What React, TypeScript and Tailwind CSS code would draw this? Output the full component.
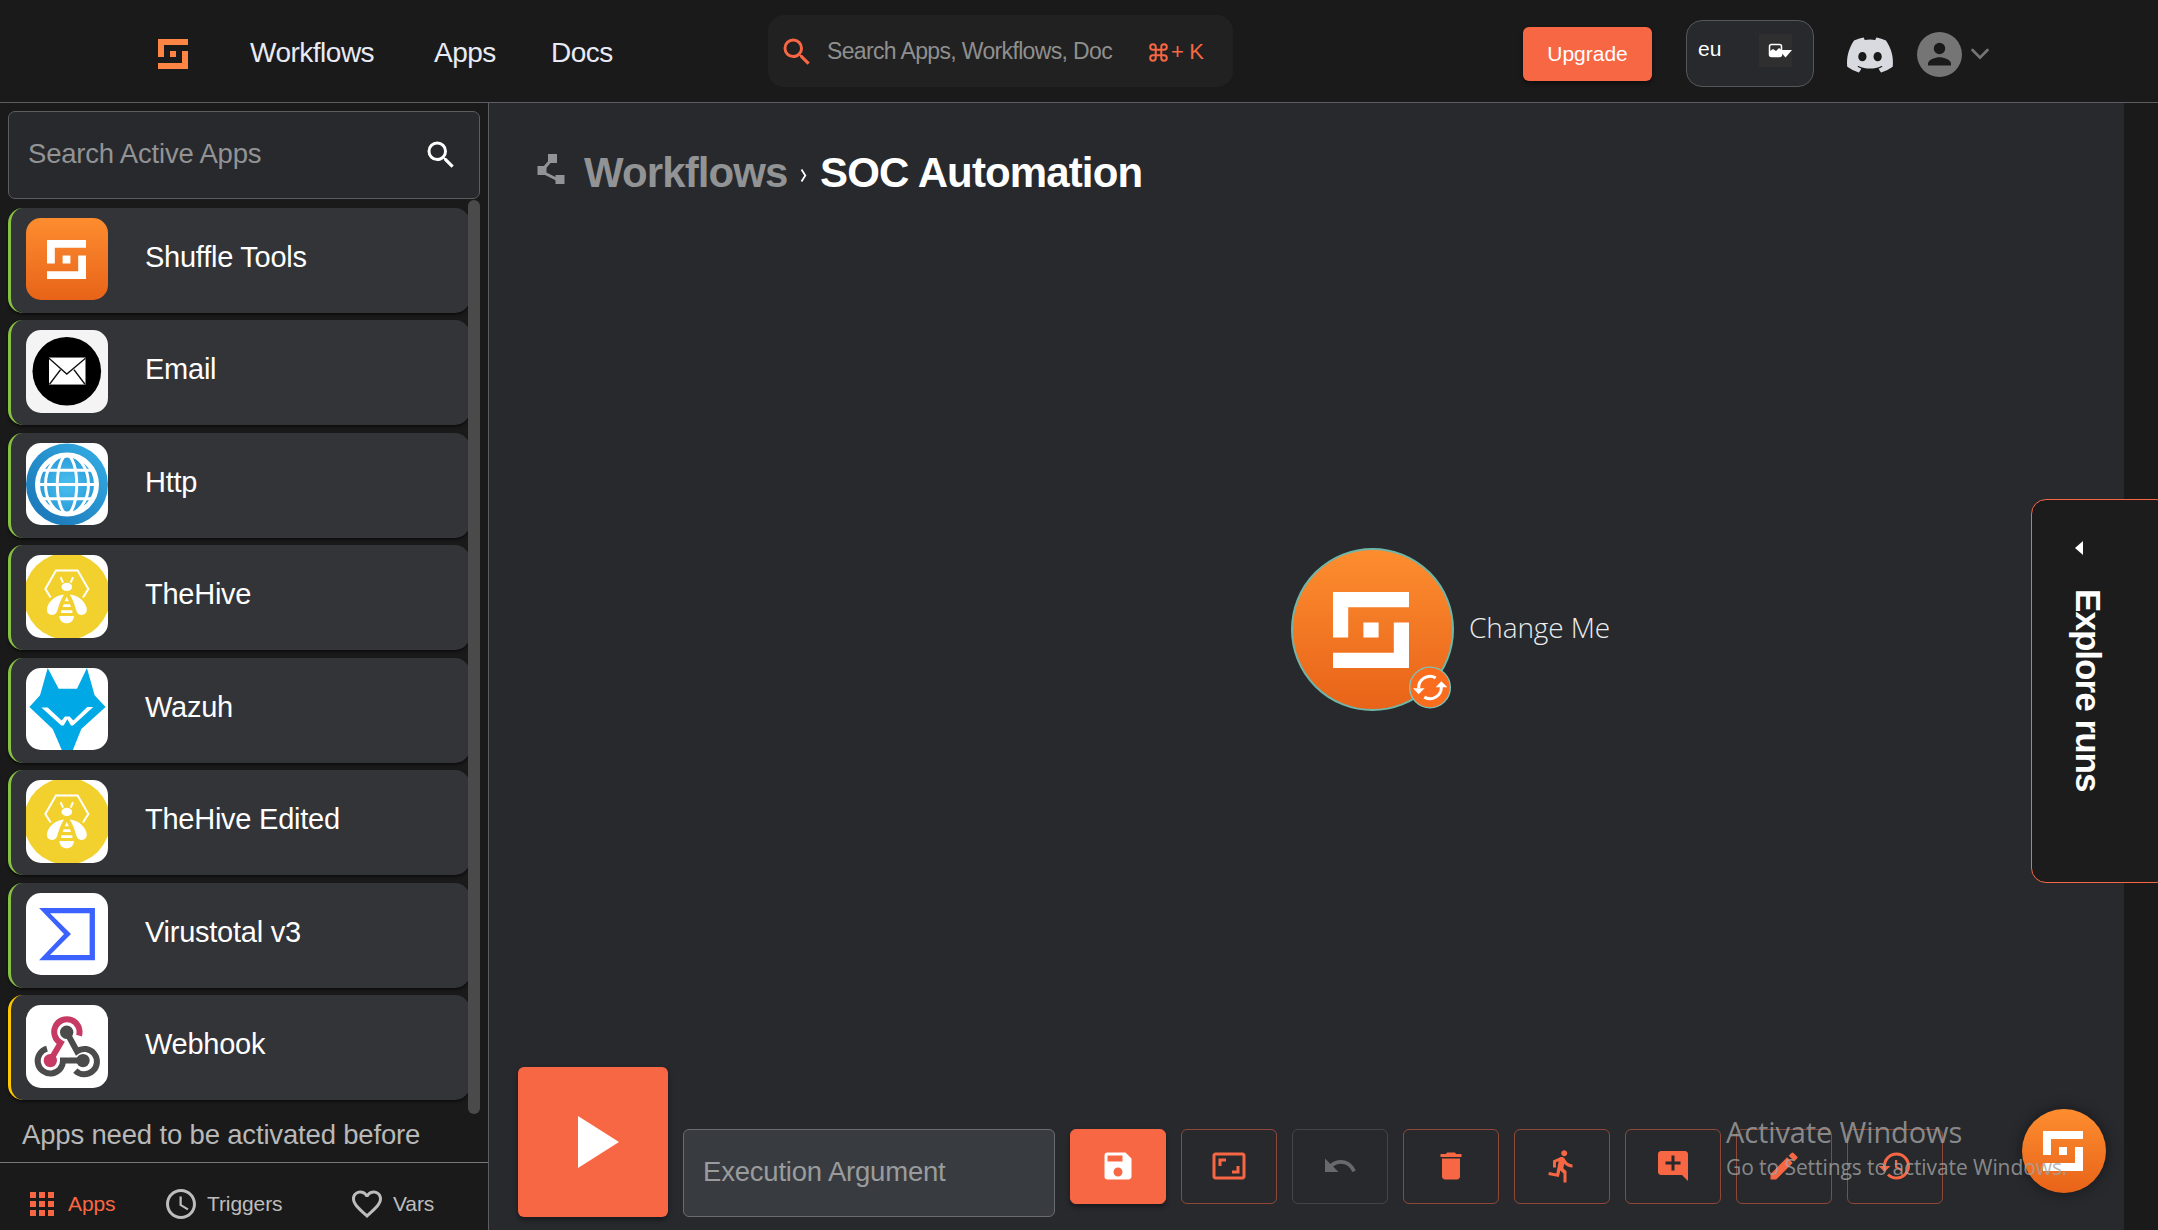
import React from "react";
import {
  MdAddComment,
  MdApps,
  MdAspectRatio,
  MdDelete,
  MdDirectionsRun,
  MdEdit,
  MdFavoriteBorder,
  MdPolyline,
  MdRestore,
  MdSave,
  MdSearch,
  MdUndo,
  MdOutlineAccessTime,
} from "react-icons/md";
import { FaDiscord } from "react-icons/fa";

function ShuffleMark({ className }: { className: string }) {
  return (
    <svg viewBox="0 0 5 5" className={className} fill="currentColor">
      <path d="M0 0H5V1H1V3H0ZM5 5H0V4H4V2H5ZM2 2H3V3H2Z" />
    </svg>
  );
}

function ShuffleTile() {
  return (
    <div className="flex size-full items-center justify-center bg-linear-to-b from-[#fd8d2f] to-[#e86318]">
      <ShuffleMark className="mr-[1px] size-[39px] text-white" />
    </div>
  );
}

function EmailTile() {
  return (
    <svg viewBox="0 0 82 82" className="size-full bg-[#f4f4f4]">
      <circle cx="40.8" cy="41" r="34.3" fill="#000" />
      <rect x="23" y="27.3" width="36.5" height="27" fill="#fff" />
      <path d="M23 28l17.8 15.8L59.500 28M23.500 54l11-14.500M59 54L48 39.500" fill="none" stroke="#111" strokeWidth="1.300" />
    </svg>
  );
}

function HttpTile() {
  return (
    <svg viewBox="0 0 82 82" className="size-full bg-white">
      <defs>
        <linearGradient id="ring" x1="0" y1="1" x2="1" y2="0">
          <stop offset="0.2" stopColor="#1e7dbd" />
          <stop offset="1" stopColor="#35b0e6" />
        </linearGradient>
        <radialGradient id="globe">
          <stop offset="0.2" stopColor="#45b9ec" />
          <stop offset="1" stopColor="#2a9bd8" />
        </radialGradient>
      </defs>
      <circle cx="41" cy="41.300" r="41" fill="url(#ring)" />
      <circle cx="41" cy="41.300" r="29.500" fill="url(#globe)" stroke="#fff" strokeWidth="5" />
      <g fill="none" stroke="#fff" strokeWidth="3">
        <ellipse cx="41" cy="41.300" rx="9.700" ry="29" />
        <ellipse cx="41" cy="41.300" rx="21.500" ry="29.500" />
        <path d="M11 41.300H71M16 27H66M16 55.600H66" />
      </g>
    </svg>
  );
}

function HiveTile() {
  return (
    <svg viewBox="78 738 246 246" className="size-full bg-white">
      <circle cx="201" cy="861" r="130" fill="#f2d12e" />
      <path d="M152 865L136 839L168 784H233L265 839L249 865" fill="none" stroke="#fff" strokeWidth="6" />
      <g fill="#fff">
        <ellipse cx="200.500" cy="833" rx="16" ry="12.500" />
        <path d="M192 856C170 858 150 872 142 893C137 908 146 917 157 917C168 917 171 909 174 898C178 883 184 868 192 856Z" />
        <path d="M209 856C231 858 251 872 259 893C264 908 255 917 244 917C233 917 230 909 227 898C223 883 217 868 209 856Z" />
        <path d="M200 863L207 876H194ZM191 885H210L213 893H188ZM184 903H217V911H183ZM178 920H222C221 934 212 942 200 942C188 942 179 934 178 920Z" />
      </g>
      <path d="M189 820L182 804M212 820L219 804" stroke="#fff" strokeWidth="6" />
    </svg>
  );
}

function WazuhTile() {
  return (
    <svg viewBox="78 1075 246 248" className="size-full bg-white">
      <path
        fill="#00a9e5"
        d="M143 1075L176 1137H231L261 1075L284 1157L317 1192L244 1258L218 1323H186L158 1258L88 1192L120 1157Z"
      />
      <path
        fill="#fff"
        d="M124 1194H143L185 1233L195 1221H209L220 1233L262 1192H280L219 1248H213L202 1229L191 1248H184Z"
      />
    </svg>
  );
}

function VirustotalTile() {
  return (
    <svg viewBox="78 400 246 248" className="size-full bg-white">
      <path
        fill="#3b61ff"
        fillRule="evenodd"
        d="M117 445H285V602H117L192 523ZM150 461L213 523L150 586H269V461Z"
      />
    </svg>
  );
}

function WebhookTile() {
  return (
    <svg viewBox="78 738 246 246" className="size-full bg-white" fill="none" strokeWidth="18">
      <path d="M200 819L231 876A38 38 0 1 1 226 934" stroke="#4b4b4b" />
      <path d="M249 904H189A38 38 0 1 1 141 868" stroke="#4b4b4b" />
      <path d="M151 904L182 851A38 38 0 1 1 237 829" stroke="#c73a63" />
      <circle cx="200" cy="819" r="20" fill="#4b4b4b" />
      <circle cx="249" cy="904" r="20" fill="#4b4b4b" />
      <circle cx="151" cy="904" r="20" fill="#c73a63" />
    </svg>
  );
}

const apps: { name: string; tile: () => React.JSX.Element; edge: string }[] = [
  { name: "Shuffle Tools", tile: ShuffleTile, edge: "border-[#86c142]" },
  { name: "Email", tile: EmailTile, edge: "border-[#86c142]" },
  { name: "Http", tile: HttpTile, edge: "border-[#86c142]" },
  { name: "TheHive", tile: HiveTile, edge: "border-[#86c142]" },
  { name: "Wazuh", tile: WazuhTile, edge: "border-[#86c142]" },
  { name: "TheHive Edited", tile: HiveTile, edge: "border-[#86c142]" },
  { name: "Virustotal v3", tile: VirustotalTile, edge: "border-[#86c142]" },
  { name: "Webhook", tile: WebhookTile, edge: "border-[#ffc800]" },
];

function Header() {
  return (
    <header className="flex h-[103px] shrink-0 border-b border-[#5c5e61] bg-[#1a1a1a] pl-[158px]">
      <ShuffleMark className="mt-[39px] size-[30px] text-[#ff8544]" />
      <nav className="mt-[39px] ml-[62px] flex text-[28px] leading-none tracking-[-0.5px] text-[#e8eaf6]">
        <span className="w-[184px]">Workflows</span>
        <span className="w-[117px]">Apps</span>
        <span className="w-[217px]">Docs</span>
      </nav>
      <div className="mt-[15px] flex h-[72px] w-[465px] rounded-[16px] bg-[#212121]">
        <MdSearch className="mt-[19px] ml-[11px] size-[36px] text-[#f86743]" />
        <span className="mt-[25px] ml-[12px] w-[322px] text-[23px] leading-none tracking-[-0.65px] text-[#8f8f8f]">
          Search Apps, Workflows, Doc
        </span>
        <span className="mt-[26px] flex text-[22px] leading-none tracking-[-0.4px] text-[#f86743]">
          <svg viewBox="0 0 24 24" className="mt-[2px] mr-[3px] size-[19px]" fill="none" stroke="currentColor" strokeWidth="2.500">
            <path d="M8.500 8.500h7v7h-7zM8.500 8.500H5A3.500 3.500 0 1 1 8.500 5zM15.500 8.500V5A3.500 3.500 0 1 1 19 8.500zM15.500 15.500H19A3.500 3.500 0 1 1 15.500 19zM8.500 15.500V19A3.500 3.500 0 1 1 5 15.500z" />
          </svg>
          + K
        </span>
      </div>
      <button className="mt-[27px] ml-[290px] h-[54px] w-[129px] rounded-[6px] bg-[#f86743] pb-[2px] text-[21px] leading-none text-white shadow-[0_3px_4px_rgba(0,0,0,0.4)]">
        Upgrade
      </button>
      <div className="mt-[20px] ml-[34px] flex h-[67px] w-[128px] rounded-[16px] border border-[#55575b] bg-[#27292d]">
        <span className="mt-[17px] ml-[11px] w-[61px] text-[21px] leading-none text-white">eu</span>
        <span className="mt-[13px] flex h-[33px] w-[33px] items-center bg-[#2f2f2f]">
          <svg viewBox="0 0 33 33" className="size-full">
            <rect x="10.500" y="10.500" width="12" height="12" rx="2" fill="none" stroke="#fff" strokeWidth="1.500" />
            <path d="M11 17l3-2 3 2 3-3 3 2v6H11z" fill="#fff" />
            <path d="M20 16h13l-6.500 7.500z" fill="#fff" />
          </svg>
        </span>
      </div>
      <FaDiscord className="mt-[30px] ml-[31px] size-[50px] text-[#d9dae0]" />
      <svg viewBox="0 0 45 45" className="mt-[32px] ml-[22px] size-[45px]">
        <circle cx="22.500" cy="22.500" r="22.500" fill="#757575" />
        <circle cx="22.500" cy="16.500" r="5.700" fill="#1a1a1a" />
        <path d="M11 33.500v-2c0-4 7.500-6.300 11.500-6.300S34 27.500 34 31.500v2z" fill="#1a1a1a" />
      </svg>
      <svg viewBox="0 0 18 12" className="mt-[48px] ml-[9px] h-[12px] w-[18px]" fill="none" stroke="#757575" strokeWidth="2.600">
        <path d="M1.500 2L9 9.700L16.500 2" strokeLinecap="round" />
      </svg>
    </header>
  );
}

function Sidebar() {
  return (
    <aside className="flex w-[489px] shrink-0 flex-col border-r border-[#5c5e61] bg-[#1a1a1a]">
      <div className="mt-[8px] ml-[8px] flex h-[88px] w-[472px] shrink-0 items-center justify-between rounded-[7px] border border-[#5c5d60] bg-[#27292d] pr-[20px] pl-[19px]">
        <span className="-mt-[2px] text-[27.500px] leading-none tracking-[-0.2px] text-[#929395]">Search Active Apps</span>
        <MdSearch className="size-[36px] text-white" />
      </div>
      <div className="flex min-h-0 flex-1 pt-[1px]">
        <div className="w-[468px] pt-[7.500px] pl-[8px]">
          <div className="flex flex-col gap-[7.500px]">
            {apps.map(({ name, tile: Tile, edge }) => (
              <div
                key={name}
                className={`flex h-[105px] w-[462px] items-start rounded-[15px] border-l-3 bg-[#333438] pt-[10.400px] pl-[15px] shadow-[0_2px_3px_rgba(0,0,0,0.5)] ${edge}`}
              >
                <div className="h-[82.500px] w-[82px] shrink-0 overflow-hidden rounded-[15px]">
                  <Tile />
                </div>
                <span className="mt-[25px] ml-[37px] text-[29px] leading-none tracking-[-0.25px] text-white">{name}</span>
              </div>
            ))}
          </div>
          <p className="mt-[21px] pl-[14px] text-[27.500px] leading-none tracking-[-0.17px] whitespace-nowrap text-[#b8b8b8]">
            Apps need to be activated before
          </p>
        </div>
        <div className="h-[914px] w-[12px] rounded-full bg-[#4a4a4a]" />
      </div>
      <div className="flex h-[68px] shrink-0 items-center border-t border-[#77787b] pt-[15px] text-[21px] leading-none tracking-[-0.1px] text-[#bdbdbd]">
        <div className="ml-[24px] flex w-[136px] items-center gap-[8px] text-[#f86743]">
          <MdApps className="size-[36px]" />
          <span className="-mt-[2px]">Apps</span>
        </div>
        <div className="ml-[3px] flex w-[186px] items-center gap-[8px]">
          <MdOutlineAccessTime className="size-[36px]" />
          <span className="-mt-[2px]">Triggers</span>
        </div>
        <div className="flex items-center gap-[8px]">
          <MdFavoriteBorder className="size-[36px]" />
          <span className="-mt-[2px]">Vars</span>
        </div>
      </div>
    </aside>
  );
}

const tools: { Icon: React.ComponentType<{ className?: string }>; style: string }[] = [
  { Icon: MdSave, style: "border-[#f86743] bg-[#f86743] text-white shadow-[0_3px_5px_rgba(0,0,0,0.4)]" },
  { Icon: MdAspectRatio, style: "border-[#8f4838] text-[#f86743]" },
  { Icon: MdUndo, style: "border-[#424447] text-[#68696c]" },
  { Icon: MdDelete, style: "border-[#8f4838] text-[#f86743]" },
  { Icon: MdDirectionsRun, style: "border-[#8f4838] text-[#f86743]" },
  { Icon: MdAddComment, style: "border-[#8f4838] text-[#f86743]" },
  { Icon: MdEdit, style: "border-[#8f4838] text-[#f86743]" },
  { Icon: MdRestore, style: "border-[#8f4838] text-[#f86743]" },
];

function Toolbar() {
  return (
    <div className="flex h-[163px] gap-[15px] pl-[29px]">
      <button className="flex h-[150px] w-[150px] items-center justify-center rounded-[6px] bg-[#f86743] shadow-[0_3px_5px_rgba(0,0,0,0.4)]">
        <svg viewBox="0 0 41 52" className="ml-[11px] h-[52px] w-[41px]" fill="#fff">
          <path d="M0 0L41 26L0 52Z" />
        </svg>
      </button>
      <div className="mt-[62px] flex h-[88px] w-[372px] items-center rounded-[6px] border border-[#696b6e] bg-[#383b40] pl-[19px]">
        <span className="-mt-[2px] text-[27.500px] leading-none tracking-[-0.2px] text-[#9a9b9d]">Execution Argument</span>
      </div>
      {tools.map(({ Icon, style }, i) => (
        <button key={i} className={`mt-[62px] flex h-[75px] w-[96px] items-center justify-center rounded-[6px] border pb-[1px] ${style}`}>
          <Icon className="size-[36px]" />
        </button>
      ))}
    </div>
  );
}

function WorkflowNode() {
  return (
    <div className="absolute top-[445px] left-[802px] flex">
      <div className="flex size-[163px] items-center justify-center rounded-full border-2 border-[#6fb5a8] bg-linear-to-b from-[#fd8d2f] to-[#e86318]">
        <ShuffleMark className="mr-[3px] size-[76px] text-white" />
      </div>
      <svg viewBox="417 408 126 128" className="absolute top-[118px] left-[118px] h-[43px] w-[42px]">
        <circle cx="480" cy="472" r="61" fill="#fb6d1e" stroke="#7cc6bb" strokeWidth="4" />
        <g fill="none" stroke="#fff" strokeWidth="9">
          <path d="M497 443A34 34 0 0 0 446 474" />
          <path d="M463 501A34 34 0 0 0 514 470" />
        </g>
        <path d="M429 474H464L446 492ZM497 471H532L514 453Z" fill="#fff" />
      </svg>
      <span className="mt-[65px] ml-[15px] font-['Open_Sans'] text-[28px] leading-none font-light tracking-[-0.1px] whitespace-nowrap text-[#ececec]">
        Change Me
      </span>
    </div>
  );
}

export default function App() {
  return (
    <div className="relative flex h-[1230px] w-[2158px] flex-col overflow-hidden bg-[#1a1a1a] font-['Liberation_Sans',Arial,sans-serif]">
      <Header />
      <div className="flex min-h-0 flex-1">
        <Sidebar />
        <main className="relative flex w-[1635px] flex-col justify-between bg-[#27292d]">
          <div className="flex items-start pt-[48px] pl-[44px] font-bold">
            <MdPolyline className="size-[36px] text-[#929395]" />
            <span className="mt-[1px] ml-[15px] w-[211px] text-[42px] leading-none tracking-[-0.9px] text-[#929395]">Workflows</span>
            <svg viewBox="0 0 7 13" className="mt-[18px] ml-[5px] h-[13px] w-[7px]" fill="none" stroke="#fff" strokeWidth="1.800">
              <path d="M1.500 0.500L5.300 6.500L1.500 12.500" />
            </svg>
            <span className="mt-[1px] ml-[13px] text-[42px] leading-none tracking-[-0.87px] text-white">SOC Automation</span>
          </div>
          <WorkflowNode />
          <Toolbar />
        </main>
      </div>
      <div className="absolute top-[499px] left-[2031px] h-[384px] w-[140px] rounded-[15px] border border-[#f86743] bg-[#1c1c1c]">
        <svg viewBox="0 0 8 14" className="mt-[41px] ml-[43px] h-[14px] w-[8px]" fill="#fff">
          <path d="M8 0V14L0 7Z" />
        </svg>
        <span className="mt-[34px] ml-[39px] block text-[35px] leading-none font-bold tracking-[-0.95px] whitespace-nowrap text-white [writing-mode:vertical-rl]">
          Explore runs
        </span>
      </div>
      <div className="absolute top-[1109px] left-[2022px] flex size-[84px] items-center justify-center rounded-full bg-linear-to-b from-[#fd8d2f] to-[#e86318] shadow-[0_0_14px_rgba(0,0,0,0.45)]">
        <ShuffleMark className="mr-[2px] size-[40px] text-white" />
      </div>
      <div className="absolute top-[1117px] left-[1726px] flex flex-col font-['Open_Sans'] leading-none whitespace-nowrap text-[#a3a3a3]/80">
        <span className="text-[29px] tracking-[-0.12px]">Activate Windows</span>
        <span className="mt-[11px] text-[21px] tracking-[-0.08px]">Go to Settings to activate Windows.</span>
      </div>
    </div>
  );
}
